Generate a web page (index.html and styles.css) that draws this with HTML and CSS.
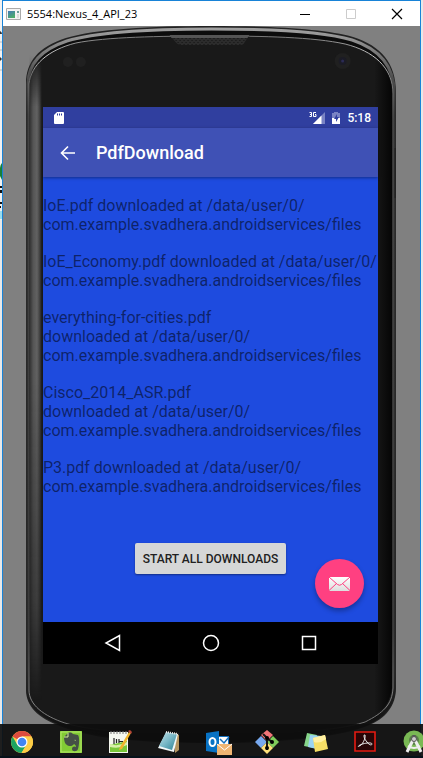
FILE: index.html
```html
<!DOCTYPE html>
<html lang="en">
<head>
<meta charset="utf-8">
<title>5554:Nexus_4_API_23</title>
<link rel="stylesheet" href="styles.css">
</head>
<body>
<div class="desktop">
  <svg class="behind" width="2" height="220" viewBox="0 0 2 220" aria-hidden="true">
    <path d="M0 42h2M0 50h2M0 70h2" stroke="#bbb"/>
    <path d="M0 31q2 1 2 3H0zM0 57l2 2-2 2z" fill="#333"/>
    <path d="M2 163Q0 165 0 168v8l2 4z" fill="#188038"/>
    <path d="M0 186h2v2H0zM0 190h2v3H0zM0 202h2v2H0zM0 206h1v2H0z" fill="#111"/>
    <path d="M0 215h2" stroke="#9de" stroke-width="8"/>
  </svg>
  <main class="window">
    <header class="titlebar">
      <svg width="15" height="12" viewBox="0 0 15 12" aria-hidden="true">
        <defs><linearGradient id="app" x2=".6" y2="1"><stop stop-color="#4479b8"/><stop offset="1" stop-color="#4cae69"/></linearGradient></defs>
        <path d="M.5.5h14v11H.5z" fill="#f4f4f4" stroke="#aaa"/>
        <path d="M2 3h7v7H2z" fill="url(#app)"/><path d="M11 3h2v2h-2z" fill="#6b9f9a"/><path d="M11 6h2v4h-2z" fill="#ddd"/>
      </svg>
      <h1 class="window-title">5554:Nexus_4_API_23</h1>
      <div class="window-buttons">
        <button aria-label="Minimize"><svg width="12" height="12"><path d="M1 6.500h10" stroke="#000"/></svg></button>
        <button aria-label="Maximize" disabled><svg width="12" height="12"><path d="M1.500 1.500h9v9h-9z" fill="none" stroke="#ccc"/></svg></button>
        <button aria-label="Close"><svg width="12" height="12"><path d="M1 1l10 10M11 1L1 11" stroke="#000" stroke-width="1.200"/></svg></button>
      </div>
    </header>
    <section class="stage">
      <div class="phone">
        <svg class="case" viewBox="26 26 371 718" preserveAspectRatio="none" aria-hidden="true">
          <defs>
            <linearGradient id="rim" x2="0" y2="1"><stop stop-color="#a0a0a0"/><stop offset=".02" stop-color="#8b8b8b"/><stop offset=".07" stop-color="#4d4d4d"/><stop offset=".12" stop-color="#333"/><stop offset=".9" stop-color="#2a2a2a"/><stop offset="1" stop-color="#0a0a0a"/></linearGradient>
            <linearGradient id="side"><stop stop-color="#303030"/><stop offset=".3" stop-color="#555"/><stop offset=".6" stop-color="#626262"/><stop offset=".8" stop-color="#444"/><stop offset="1" stop-color="#191919"/></linearGradient>
            <linearGradient id="fade" x2="0" y2="1"><stop stop-color="#fff" stop-opacity="0"/><stop offset=".08" stop-color="#fff"/><stop offset=".5" stop-color="#fff"/><stop offset=".85" stop-color="#fff" stop-opacity=".5"/><stop offset="1" stop-color="#fff" stop-opacity="0"/></linearGradient>
            <linearGradient id="line" x2="0" y2="1"><stop stop-color="#777"/><stop offset=".03" stop-color="#ccc"/><stop offset=".07" stop-color="#777"/><stop offset=".12" stop-color="#555"/><stop offset=".85" stop-color="#4c4c4c"/><stop offset=".96" stop-color="#888"/><stop offset=".985" stop-color="#777"/><stop offset="1" stop-color="#0c0c0c"/></linearGradient>
            <linearGradient id="right"><stop stop-color="#181818"/><stop offset="1" stop-color="#050505"/></linearGradient>
            <mask id="m"><path d="M28 55H42V700H28z" fill="url(#fade)"/></mask>
            <pattern id="mesh" width="4" height="4" patternUnits="userSpaceOnUse"><path d="M0 0h4v4H0z" fill="#2c2c2c"/><path d="M0 0h1v1H0zM2 2h1v1H2z" fill="#111"/></pattern>
          </defs>
          <path d="M26 690V84C26 62 38 47 66 38C96 29 150 26 212 26C275 26 326 29 354 37C382 46 397 63 397 92V688C397 705 387 719 368 726C335 739 270 743 212 743C150 743 94 740 60 726C38 718 26 706 26 690Z" fill="#222"/>
          <path d="M28 690V84C28 64 40 50 67 41C97 32 150 29 212 29C275 29 326 32 353 40C380 49 395 66 395 92V688C395 704 385 717 367 724C335 736 270 741 212 741C150 741 96 737 62 724C40 716 28 705 28 690Z" fill="#0c0c0c" stroke="url(#rim)" stroke-width="3"/>
          <path d="M29 690V84C31 65 48 50 76 43C106 37 160 36 212 36C264 36 314 37 346 44C374 51 394 67 394 94V688C393 705 384 713 366 722C333 733 270 733 212 733C150 733 96 733 65 723C44 716 29 705 29 690Z" fill="#191919" stroke="url(#line)" stroke-width="1"/>
          <path d="M376 60Q394 72 393 96V688Q390 708 376 714z" fill="url(#right)"/>
          <path d="M29.500 55H42V700H29.500z" fill="url(#side)" mask="url(#m)"/>
          <path d="M170 35H250L244 44Q243 45 241 45H181Q178 45 176 42z" fill="url(#mesh)"/>
          <path d="M170 35H250l-2 3H172z" fill="#555"/>
          <circle cx="68" cy="62" r="5" fill="#202020"/><circle cx="81" cy="62" r="5" fill="#202020"/>
          <circle cx="343.500" cy="61" r="8" fill="#202020"/><circle cx="343.500" cy="61" r="4" fill="#1b1b25"/><circle cx="343.500" cy="61" r="1.500" fill="#2b2b55"/>
          <path d="M396.500 148v50" stroke="#222" stroke-width="2"/>
        </svg>
        <div class="screen">
          <div class="status">
            <svg class="sd" width="10" height="12" viewBox="0 0 10 12" aria-hidden="true"><path d="M3 0h6q1 0 1 1v10q0 1-1 1H1q-1 0-1-1V3z" fill="#fff"/><path d="M3.500 1.500v2M5.500 1.500v2M7.500 1.500v2" stroke="#303f9f"/></svg>
            <svg width="16" height="14" viewBox="0 0 16 14" aria-label="3G signal"><path d="M16 1v12H4z" fill="#7983c4"/><path d="M12.500 4.500V13H4z" fill="#fff"/><path d="M.5 1.500h2v2H1h1.500v2H.5M7 1.500H4.500v4H7v-2H6" fill="none" stroke="#fff"/></svg>
            <svg width="8" height="12" viewBox="0 0 8 12" aria-label="Battery charging"><path d="M2 0h4v1h2v6H0V1h2z" fill="#7983c4"/><path d="M0 6h8v6H0z" fill="#fff"/><path d="M5 2L2 7h2v3l3-5H5z" fill="#303f9f"/></svg>
            <time>5:18</time>
          </div>
          <div class="appbar">
            <button class="back" aria-label="Back"><svg width="16" height="16" viewBox="0 0 16 16" fill="none" stroke="#fff" stroke-width="1.600"><path d="M15 8H2M8 1.500L1.500 8 8 14.500"/></svg></button>
            <h2>PdfDownload</h2>
          </div>
          <div class="content">
            <ul class="log">
              <li>IoE.pdf downloaded at /data/user/0/<br>com.example.svadhera.androidservices/files</li>
              <li>IoE_Economy.pdf downloaded at /data/user/0/<br>com.example.svadhera.androidservices/files</li>
              <li>everything-for-cities.pdf<br>downloaded at /data/user/0/<br>com.example.svadhera.androidservices/files</li>
              <li>Cisco_2014_ASR.pdf<br>downloaded at /data/user/0/<br>com.example.svadhera.androidservices/files</li>
              <li>P3.pdf downloaded at /data/user/0/<br>com.example.svadhera.androidservices/files</li>
            </ul>
            <button class="start">START ALL DOWNLOADS</button>
            <button class="fab" aria-label="Mail"><svg width="21" height="14" viewBox="0 0 21 14"><defs><linearGradient id="env" x2="0" y2="1"><stop stop-color="#fff"/><stop offset="1" stop-color="#ddd"/></linearGradient></defs><rect width="21" height="14" rx="1" fill="url(#env)"/><path d="M0 0l8.500 7.500q2 1.500 4 0L21 0M0 13.500L7.500 6.500M21 13.500L13.500 6.500" fill="none" stroke="#ff4081"/></svg></button>
          </div>
          <nav class="navbar">
            <button aria-label="Back"><svg width="18" height="18" viewBox="0 0 18 18"><path d="M15.500 1.500v15L2 9z"/></svg></button>
            <button aria-label="Home"><svg width="18" height="18" viewBox="0 0 18 18"><circle cx="9" cy="9" r="7.500"/></svg></button>
            <button aria-label="Recents"><svg width="18" height="18" viewBox="0 0 18 18"><path d="M2.500 2.500h13v13h-13z"/></svg></button>
          </nav>
        </div>
      </div>
    </section>
  </main>
</div>
<footer class="taskbar">
  <button aria-label="Chrome"><svg viewBox="0 0 24 24"><circle cx="12" cy="12" r="11" fill="#fc4"/><path d="M12 12L2.500 6.500A11 11 0 0 1 21.500 6.500H12z" fill="#dd4b3e"/><path d="M2.500 6.500A11 11 0 0 0 11.500 23L16.500 14.500 12 12 7.300 14.700z" fill="#1da462"/><path d="M12 6.500h9.500A11 11 0 0 1 11.500 23l5.200-8.500z" fill="#fdcd46"/><circle cx="12" cy="12" r="5.500" fill="#fff"/><circle cx="12" cy="12" r="4.300" fill="#4285f4"/></svg></button>
  <button aria-label="Evernote"><svg viewBox="0 0 24 24"><path d="M1 1h22v22H1z" fill="#82cb35"/><path d="M2 2h20v20H2z" fill="none" stroke="#b4e66b"/><path d="M5 7l4-4c3-1 4 0 5 1l5 1c2 3 1 11 0 14-1 3-6 3-6 0s3-3 4-2c0-2-1-2-2-3-1 2-5 3-7 1-2-1-3-4-3-8z" fill="#455046"/><path d="M5 7h4V3" fill="none" stroke="#d6ed9d"/><path d="M15 10q2-1 2 1z" fill="#a9ca78"/></svg></button>
  <button aria-label="Notepad++"><svg viewBox="0 0 24 24"><path d="M1 2h19v21H1z" fill="#f4f7ef"/><path d="M2 15l17-4v11H2z" fill="#7ac83a"/><path d="M2 14q8 3 17-2v3q-8 4-17 2z" fill="#d8f0a9"/><path d="M3 1v3M6 1v3M9 1v3M12 1v3M15 1v3M18 1v3" stroke="#777"/><path d="M6 8v6M8.500 9v4M11 9v4M11 11.500h4" stroke="#222" stroke-width="1.200"/><path d="M21 2l2 1-9 16-3 1 1-3z" fill="#f2b52c"/><path d="M20 1l2-1 2 2-1 2z" fill="#b54537"/></svg></button>
  <button aria-label="Notepad"><svg viewBox="0 0 24 24"><defs><linearGradient id="np" x2="1" y2="1"><stop stop-color="#c7e5ea"/><stop offset=".5" stop-color="#77b7c6"/><stop offset="1" stop-color="#2a8094"/></linearGradient></defs><path d="M18 3l4 2v15l-4 3z" fill="#b49561"/><path d="M9 3l12 1-4 18-16-4z" fill="#f2f8f8"/><path d="M9 2l11 2-5 16-13-4z" fill="url(#np)"/><path d="M9 2l12 2" stroke="#eee" stroke-width="2" stroke-dasharray="1 1"/></svg></button>
  <button aria-label="Outlook"><svg viewBox="0 0 24 24"><path d="M12 6h11v13H12z" fill="#1670bd"/><path d="M13 7h9v8h-9z" fill="#fff"/><path d="M14 9l4 4 5-6" stroke="#1670bd" stroke-width="1.500" fill="none"/><path d="M0 3l13-2v22L0 21z" fill="#0872c4"/><ellipse cx="6.500" cy="12" rx="3" ry="4" fill="none" stroke="#fff" stroke-width="2"/><path d="M11 14h15v11H11z" fill="#efb573"/><path d="M11 14l7.500 6 7.500-6" fill="none" stroke="#fff"/></svg></button>
  <button aria-label="Git"><svg viewBox="0 0 24 24"><path d="M12 0l6 5-6 6-6-6z" fill="#f17478"/><path d="M6 6l6 6-6 6-6-6z" fill="#78a9ef"/><path d="M18 6l6 6-6 6-6-6z" fill="#7fcb5b"/><path d="M12 12l6 6-6 6-6-6z" fill="#ffe17a"/><path d="M8 4l4 4v12M12 8l5 4" fill="none" stroke="#161616" stroke-width="2"/><circle cx="12" cy="8" r="2"/><circle cx="17" cy="12" r="2"/><circle cx="12" cy="18" r="2"/></svg></button>
  <button aria-label="Sticky Notes"><svg viewBox="0 0 24 24"><path d="M3 3l10 2-3 13-10-2z" fill="#86d58a"/><path d="M6 5l12 1-1 14-13-3z" fill="#9bd3f2"/><path d="M9 8l12-3 3 14-13 3z" fill="#f6df66"/><path d="M9 8l12-3 1 4q-6 5-12 3z" fill="#fff0a1"/></svg></button>
  <button aria-label="Acrobat Reader"><svg viewBox="0 0 24 24"><path d="M2 2h20v19H2z" fill="#280506" stroke="#e51b12" stroke-width="1.600"/><path d="M6 16c3 0 7-8 6-11-2-1-1 4 2 7 3 4 5 3 5 2 0-2-8-1-12 1-2 1-2 2-1 1z" fill="none" stroke="#eee"/></svg></button>
  <button aria-label="Android Studio"><svg viewBox="0 0 24 24"><circle cx="12" cy="11" r="10.500" fill="#79b854"/><circle cx="12" cy="10" r="5" fill="#587d48"/><path d="M12 5v3" stroke="#555" stroke-width="3"/><path d="M11 10L5 22M13 10l6 12" stroke="#eee" stroke-width="3"/><path d="M6 16q6 4 12 0" fill="none" stroke="#eee" stroke-width="2"/><circle cx="12" cy="9" r="2.500" fill="#ccc" stroke="#555"/></svg></button>
</footer>
</body>
</html>
```
FILE: styles.css
```css
* { box-sizing: border-box; }
body { margin: 0; min-height: 100vh; overflow: hidden; font-family: Roboto, sans-serif; background: #e8e8e8; }
button { display: flex; align-items: center; justify-content: center; margin: 0; padding: 0; border: 0; background: none; }
h1, h2, ul { margin: 0; padding: 0; }
svg { display: block; flex: none; }
.desktop { display: flex; height: 100vh; padding-right: 2px; }
.behind { background: #f1f1f1; }
.window { flex: 1; min-width: 0; border: 1px solid #1883d7; background: #808080; }
.titlebar { display: flex; align-items: center; height: 25px; padding-left: 3px; background: #fff; }
.window-title { flex: 1; padding-left: 6px; font: 11px/16px "Open Sans", sans-serif; color: #000; }
.window-buttons { display: flex; }
.window-buttons button { width: 46px; height: 24px; }
.stage { padding: 0 24px 0 23px; }
.phone { position: relative; padding: 81px 18px 80px 17px; }
.case { position: absolute; inset: 0; width: 100%; height: 100%; }
.screen { position: relative; background: #1e4bdf; color: #fff; }
.status { display: flex; align-items: center; gap: 7px; height: 21px; padding: 0 7px 0 11px; background: #303f9f; }
.sd { margin-right: auto; }
.status time { font-size: 12px; font-weight: 500; line-height: 16px; }
.appbar { position: relative; display: flex; align-items: center; gap: 20px; height: 49px; padding-left: 17px; background: #3f51b5; box-shadow: 0 1px 3px rgba(0, 0, 0, .4); }
.appbar h2 { font-size: 18px; font-weight: 500; line-height: 24px; }
.content { position: relative; display: flex; flex-direction: column; align-items: center; gap: 47px; padding: 19px 0 48px; }
.log { display: flex; flex-direction: column; gap: 18px; width: 100%; list-style: none; font-size: 16px; line-height: 19px; white-space: nowrap; color: rgba(0, 0, 0, .54); }
.start { padding: 0 8px; height: 31px; border-radius: 2px; background: #d6d7d7; box-shadow: 0 1px 2px rgba(0, 0, 0, .4); font: 500 12px/16px Roboto, sans-serif; color: #212121; }
.fab { position: absolute; right: 14px; bottom: 14px; width: 49px; height: 49px; border-radius: 50%; background: #ff4081; box-shadow: 0 3px 5px rgba(0, 0, 0, .3); }
.navbar { display: flex; justify-content: center; gap: 80px; height: 42px; background: #000; }
.navbar svg { fill: none; stroke: #fff; stroke-width: 1.5; }
.taskbar { position: fixed; inset: auto 0 0; display: flex; align-items: center; gap: 25px; height: 34px; padding: 4px 0 0 10px; overflow: hidden; background: rgba(14, 14, 14, .93); border-bottom: 2px solid #06111a; }
.taskbar button { flex: none; width: 24px; height: 24px; }
.taskbar svg { width: 24px; height: 24px; overflow: visible; }
```
